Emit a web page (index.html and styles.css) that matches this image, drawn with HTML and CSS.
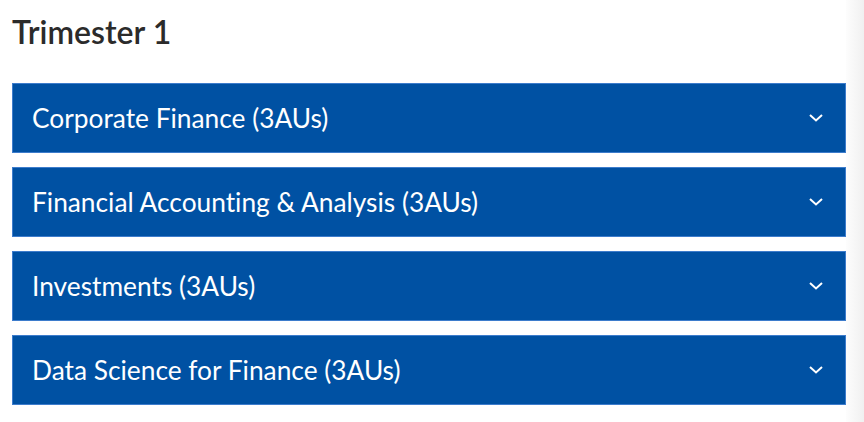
FILE: index.html
```html
<!DOCTYPE html>
<html lang="en">
<head>
<meta charset="utf-8">
<link rel="stylesheet" href="styles.css">
</head>
<body>
<div class="page">
  <main class="content">
    <h2 class="title">Trimester 1</h2>
    <div class="accordion">
      <div class="item"><span class="label">Corporate Finance (3AUs)</span><svg class="chev" width="14" height="8" viewBox="0 0 14 8"><path d="M1 1l6 5.5L13 1" fill="none" stroke="#fff" stroke-width="2"/></svg></div>
      <div class="item"><span class="label">Financial Accounting &amp; Analysis (3AUs)</span><svg class="chev" width="14" height="8" viewBox="0 0 14 8"><path d="M1 1l6 5.5L13 1" fill="none" stroke="#fff" stroke-width="2"/></svg></div>
      <div class="item"><span class="label">Investments (3AUs)</span><svg class="chev" width="14" height="8" viewBox="0 0 14 8"><path d="M1 1l6 5.5L13 1" fill="none" stroke="#fff" stroke-width="2"/></svg></div>
      <div class="item"><span class="label">Data Science for Finance (3AUs)</span><svg class="chev" width="14" height="8" viewBox="0 0 14 8"><path d="M1 1l6 5.5L13 1" fill="none" stroke="#fff" stroke-width="2"/></svg></div>
    </div>
  </main>
  <div class="edge"></div>
</div>
</body>
</html>
```
FILE: styles.css
```css
html, body {
  margin: 0;
  padding: 0;
  background: #fff;
}
.page {
  display: flex;
  width: 864px;
  height: 422px;
  font-family: Lato, "Liberation Sans", sans-serif;
}
.content {
  flex: 1;
  padding: 10px 0 0 12px;
}
.edge {
  width: 18px;
  background: linear-gradient(to right, #fdfdfd, #f0f0f0);
}
.title {
  margin: 0 0 29px;
  font-size: 32px;
  font-weight: 600;
  color: #2b2b2b;
  line-height: 44px;
}
.accordion {
  display: flex;
  flex-direction: column;
  gap: 14px;
}
.item {
  height: 70px;
  box-sizing: border-box;
  background: #0051a3;
  border: 1px solid #3d7ccc;
  display: flex;
  align-items: center;
  justify-content: space-between;
  padding: 0 22px 0 19px;
  color: #fff;
}
.label {
  font-size: 26.3px;
  line-height: 1;
  font-variant-ligatures: none;
}
.chev {
  display: block;
}
```
